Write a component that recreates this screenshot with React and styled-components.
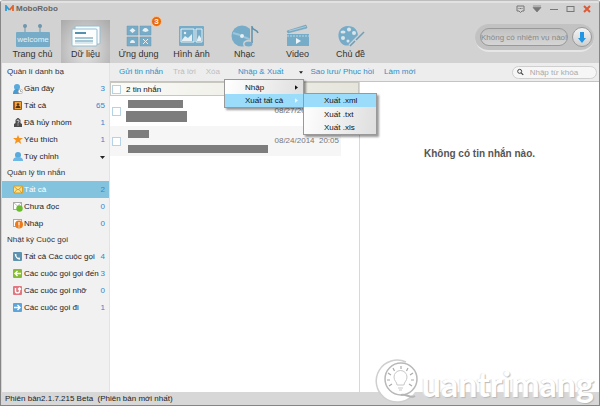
import { useState } from "react";
import styled, { createGlobalStyle } from "styled-components";

const GlobalStyle = createGlobalStyle`
  * {
    box-sizing: border-box;
  }

  body {
    margin: 0;
    font-family: "Liberation Sans", Arial, sans-serif;
    font-size: 8px;
    color: #333;
  }

  button, input {
    font: inherit;
    color: inherit;
    margin: 0;
    padding: 0;
    border: none;
    background: none;
  }
`;

const Window = styled.div`
  position: relative;
  min-height: 100vh;
  display: flex;
  flex-direction: column;
  overflow: hidden;
  background: #fff;
  border: 1px solid #858585;
  border-top-color: #bdbdbd;
  border-radius: 3px 3px 0 0;
`;

const TopBar = styled.header`
  display: flex;
  justify-content: space-between;
  height: 62px;
  background: #d2d2d2;
  border-top: 2px solid #e2e2e2;
`;

const TopLeft = styled.div`
  display: flex;
  flex-direction: column;
  justify-content: space-between;
`;

const TopRight = styled.div`
  display: flex;
  flex-direction: column;
  align-items: flex-end;
`;

const Brand = styled.h1`
  display: flex;
  align-items: center;
  gap: 2px;
  height: 11px;
  margin: 0 4px;
  font-size: 8px;
  font-weight: 700;
  color: #666;
`;

const Nav = styled.nav`
  display: flex;
  gap: 4px;
  padding-left: 7px;
`;

const Tab = styled.button`
  position: relative;
  display: flex;
  flex-direction: column;
  align-items: center;
  justify-content: flex-end;
  width: 49px;
  height: 43px;
  padding-bottom: 3px;
  font-size: 9px;
  line-height: 12px;
  white-space: nowrap;
  background: ${(p) =>
    p.$active
      ? "radial-gradient(ellipse at 50% 70%, #dadada 20%, #a9a9a9 100%)"
      : "none"};
`;

const Badge = styled.span`
  position: absolute;
  top: -4px;
  right: 1px;
  width: 11px;
  height: 11px;
  border-radius: 50%;
  border: 1px solid #f6c9a0;
  background: #e9690c;
  color: #fff;
  font-size: 8px;
  font-weight: 700;
  line-height: 9px;
`;

const Controls = styled.div`
  display: flex;
  align-items: center;
  gap: 6px;
  height: 12px;
  padding-right: 7px;

  button {
    display: flex;
  }
`;

const TaskArea = styled.div`
  display: flex;
  align-items: center;
  margin: 9px 5px 0 0;
  padding: 3px 2px 3px 5px;
  gap: 4px;
  height: 28px;
  border-radius: 14px;
  background: #c2c2c2;
  border-bottom: 2px solid #e6e6e6;
`;

const TaskLabel = styled.div`
  width: 88px;
  height: 18px;
  border: 1px solid #999;
  border-radius: 9px;
  background: linear-gradient(#c2c2c2, #d5d5d5);
  color: #898989;
  line-height: 17px;
  text-align: center;
  white-space: nowrap;
`;

const DownloadButton = styled.button`
  display: flex;
  align-items: center;
  justify-content: center;
  width: 20px;
  height: 20px;
  border: 1px solid #999;
  border-radius: 50%;
  background: linear-gradient(#f4f4f4, #cfcfcf);
`;

const Body = styled.div`
  flex: 1;
  display: grid;
  grid-template-columns: 109px 1fr;
`;

const Sidebar = styled.aside`
  padding-top: 1px;
  background: #f1f1f1;
  border-left: 1px solid #d5d5d5;
  border-right: 1px solid #e3e3e3;
`;

const GroupTitle = styled.h2`
  margin: 0;
  padding-left: 5px;
  font-size: 8px;
  font-weight: 400;
  line-height: 16px;
  color: #333;
`;

const SideRow = styled.button`
  display: flex;
  align-items: center;
  gap: 1px;
  width: 100%;
  height: 17px;
  padding: 0 4px 0 11px;
  text-align: left;
  white-space: nowrap;
  background: ${(p) => (p.$active ? "#84c3de" : "none")};
  color: ${(p) => (p.$active ? "#fff" : "#222")};

  svg {
    flex: none;
  }
`;

const Count = styled.span`
  margin-left: auto;
  color: #3585cf;
`;

const Main = styled.main`
  display: flex;
  flex-direction: column;
  min-width: 0;
`;

const Toolbar = styled.div`
  display: flex;
  align-items: center;
  justify-content: space-between;
  height: 19px;
  padding: 0 2px 0 9px;
  background: #ededed;
  border-bottom: 1px solid #c4c4c4;
`;

const Actions = styled.div`
  display: flex;
  align-items: center;
  gap: 10px;
`;

const Action = styled.button`
  display: flex;
  align-items: center;
  gap: 16px;
  line-height: 12px;
  white-space: nowrap;
  color: #2f8fc8;

  &:disabled {
    color: #bdbdbd;
  }
`;

const MenuAnchor = styled.div`
  position: relative;
  margin: 0 -3px 0 8px;
`;

const Menu = styled.div`
  position: absolute;
  z-index: 2;
  top: ${(p) => (p.$sub ? "-1px" : "13px")};
  left: ${(p) => (p.$sub ? "100%" : "-14px")};
  width: ${(p) => (p.$sub ? "74px" : "80px")};
  border: 1px solid #999;
  background: linear-gradient(100deg, #fff, #dedede);
  box-shadow: 2px 2px 2px rgba(0, 0, 0, 0.4);
`;

const MenuSlot = styled.div`
  position: relative;
`;

const MenuItem = styled.button`
  display: flex;
  align-items: center;
  justify-content: space-between;
  width: 100%;
  height: ${(p) => (p.$tall ? "14px" : "13px")};
  padding: 0 5px 0 20px;
  color: #111;
  white-space: nowrap;
  background: ${(p) => (p.$active ? "#9bdcfb" : "none")};
`;

const Search = styled.label`
  display: flex;
  align-items: center;
  gap: 6px;
  width: 85px;
  height: 13px;
  padding: 0 4px;
  border: 1px solid #cfcfcf;
  border-radius: 7px;
  background: #f6f6f6;

  input {
    width: 100%;
    min-width: 0;
    outline: none;
  }

  input::placeholder {
    color: #aaa;
    opacity: 1;
  }
`;

const Panes = styled.div`
  flex: 1;
  display: grid;
  grid-template-columns: 250px 1fr;
`;

const List = styled.section`
  border-right: 1px solid #d8d8d8;
`;

const ListHeader = styled.label`
  display: flex;
  align-items: center;
  gap: 5px;
  height: 14px;
  padding-left: 1px;
  border: 1px solid #c9c8c0;
  background: linear-gradient(90deg, #fbfbf8, #e6e5dc);
  color: #111;
`;

const Check = styled.input.attrs({ type: "checkbox" })`
  appearance: none;
  flex: none;
  width: 9px;
  height: 9px;
  && {
    border: 1px solid #b4d3e6;
    background: #fff;
  }
`;

const Message = styled.div`
  display: flex;
  align-items: center;
  height: 30px;
  margin-right: 18px;
  padding: 0 2px;
  background: ${(p) => (p.$alt ? "#f6f6f6" : "#fff")};
`;

const Redacted = styled.div`
  flex: 1;
  display: flex;
  flex-direction: column;
  gap: ${(p) => (p.$wide ? "7px" : "3px")};
  padding-left: 5px;
`;

const Bar = styled.span`
  width: ${(p) => p.$width}px;
  height: ${(p) => p.$height}px;
  margin-left: ${(p) => (p.$inset ? "2px" : "0")};
  background: #7d7d7d;
`;

const MessageBody = styled.div`
  position: relative;
  flex: 1;
`;

const Time = styled.time`
  position: absolute;
  right: 0;
  top: 6px;
  line-height: 10px;
  color: #777;
  white-space: pre;
`;

const Empty = styled.section`
  display: flex;
  justify-content: center;
  padding-top: 65px;
  font-size: 10px;
  line-height: 14px;
  font-weight: 700;
  color: #555;
`;

const Status = styled.footer`
  height: 13px;
  padding-left: 4px;
  background: #d7d7d7;
  line-height: 14px;
  color: #222;
`;

const Watermark = styled.div`
  position: absolute;
  right: 5px;
  bottom: 0;
  display: flex;
  align-items: flex-end;
  pointer-events: none;

  span {
    font-family: Lato, sans-serif;
    font-size: 34px;
    line-height: 42px;
    font-weight: 700;
    color: #fff;
    text-shadow: 1px 1px 1px #b8b8b8, -1px 0 1px #e4e4e4;
  }
`;

const BLUE = "#77acc9";

const tabs = [
  {
    label: "Trang chủ",
    icon: (
      <svg width="36" height="25" viewBox="0 0 36 25">
        <path d="M10 3v8M25 3v8" stroke="#6f97ac" strokeWidth="1" />
        <circle cx="10" cy="3" r="2" fill="#6f97ac" />
        <circle cx="25" cy="3" r="2" fill="#6f97ac" />
        <rect x="1" y="9" width="34" height="15" rx="1" fill={BLUE} />
        <text x="18" y="19" textAnchor="middle" fontFamily="Liberation Sans" fontSize="8" fill="#e3eff5">
          welcome
        </text>
      </svg>
    ),
  },
  {
    label: "Dữ liệu",
    icon: (
      <svg width="32" height="23" viewBox="0 0 32 23">
        <rect x="5" y="1" width="25" height="18" rx="1" fill="#f7fbfd" stroke="#95bdcf" />
        <rect x="2" y="4" width="25" height="17" rx="1" fill="#fcfefe" stroke="#95bdcf" />
        <path d="M5 8h11" stroke="#5590ae" strokeWidth="2" />
        <path d="M5 13h18M5 16h18" stroke="#5590ae" strokeWidth="1" />
        <path d="M5 18h18" stroke="#b4d3e0" strokeWidth="1" />
      </svg>
    ),
  },
  {
    label: "Ứng dụng",
    badge: 3,
    icon: (
      <svg width="26" height="23" viewBox="0 0 26 23">
        <path d="M1 1h11v9H1zM14 1h11v9H14zM1 12h11v9H1zM14 12h11v9H14z" fill={BLUE} stroke="#6899b3" strokeWidth=".5" />
        <path d="M6.500 3l3 2.500-3 2.500-3-2.500zM19.500 3c2 0 3 2 3 3l-3 1-3-1c0-1 1-3 3-3zM4 18c0-4 5-4 5 0z" fill="#e6f0f4" />
        <path d="M17 14l5 5M22 14l-5 5" stroke="#e6f0f4" />
      </svg>
    ),
  },
  {
    label: "Hình ảnh",
    icon: (
      <svg width="27" height="23" viewBox="0 0 27 23">
        <rect x="1" y="1" width="25" height="20" rx="1" fill={BLUE} />
        <path d="M3 4h13v13H3zM18 4h6v13h-6z" fill="none" stroke="#e6f0f4" />
        <path d="M4 15l3-4 3 2 4-4v7H4z" fill="#e6f0f4" />
        <circle cx="7" cy="8" r="1.200" fill="#e6f0f4" />
        <path d="M19 15l2-5 2 3v3h-4z" fill="#e6f0f4" />
      </svg>
    ),
  },
  {
    label: "Nhạc",
    icon: (
      <svg width="28" height="23" viewBox="0 0 28 23">
        <circle cx="11" cy="11" r="10.500" fill={BLUE} />
        <path d="M2 8l7 2M13 12l7 3" stroke="#9bc5da" strokeWidth="2" />
        <circle cx="11" cy="11" r="2" fill="#e6f0f4" />
        <path d="M21 1v17M21 2c1 4 5 2 6 6" stroke="#d2d2d2" strokeWidth="4" fill="none" />
        <ellipse cx="17" cy="19" rx="5" ry="4" fill="#d2d2d2" />
        <path d="M21 1v17M21 2c1 4 5 2 6 6" stroke="#5e91ab" strokeWidth="1.500" fill="none" />
        <ellipse cx="17.500" cy="19" rx="4" ry="2.500" fill={BLUE} />
      </svg>
    ),
  },
  {
    label: "Video",
    icon: (
      <svg width="24" height="24" viewBox="0 0 24 24">
        <path d="M1 7L20 1l1 3-19 5z" fill={BLUE} stroke="#6899b3" strokeWidth=".5" />
        <path d="M3 7l17-4.500" stroke="#a9cbdb" />
        <rect x="1" y="10" width="22" height="12" fill={BLUE} />
        <path d="M1 12h22" stroke="#b9d6e3" strokeDasharray="2 1" />
        <path d="M10 14l5 3-5 3z" fill="#edf5f8" />
      </svg>
    ),
  },
  {
    label: "Chủ đề",
    icon: (
      <svg width="28" height="23" viewBox="0 0 28 23">
        <path d="M11 1C3 1 0 8 2 14c2 7 9 8 12 5 3-2 6-3 7-8 0-6-4-10-10-10z" fill={BLUE} />
        <g fill="#d9e5ea">
          <ellipse cx="6" cy="7" rx="2.500" ry="1.500" />
          <circle cx="12" cy="4.500" r="2" />
          <circle cx="17" cy="8" r="2" />
          <circle cx="6" cy="13" r="2" />
          <circle cx="11" cy="16" r="1.500" />
        </g>
        <path d="M27 7L13 21" stroke="#d2d2d2" strokeWidth="4" />
        <path d="M27 7l-8 8M18 16l-5 5" stroke="#6f9db5" strokeWidth="1.500" />
      </svg>
    ),
  },
];

const PersonIcon = () => (
  <svg width="10" height="9" viewBox="0 0 10 9">
    <circle cx="5" cy="3" r="3" fill="#58a9dc" />
    <path d="M0 9c0-3 2-4 5-4s5 1 5 4z" fill="#6db7e4" />
  </svg>
);

const RecentIcon = () => (
  <svg width="10" height="10" viewBox="0 0 10 10">
    <circle cx="4" cy="3" r="3" fill="#58a9dc" />
    <path d="M0 10c0-4 2-5 4-5s4 1 4 5z" fill="#4a9ad0" />
    <circle cx="7.500" cy="7.500" r="2.300" fill="#fff" stroke="#aaa" strokeWidth=".6" />
    <path d="M7.500 6v1.700H9" fill="none" stroke="#777" strokeWidth=".6" />
  </svg>
);

const BookIcon = () => (
  <svg width="10" height="9" viewBox="0 0 10 9">
    <rect width="9" height="9" rx="1" fill="#a85614" />
    <rect x="2" y="1" width="6" height="7" fill="#f0a640" />
    <circle cx="5" cy="3.500" r="1.300" fill="#59300d" />
    <path d="M2.500 7c0-3 5-3 5 0z" fill="#59300d" />
  </svg>
);

const UngroupedIcon = () => (
  <svg width="10" height="9" viewBox="0 0 10 9">
    <path d="M1 9V6l1.500-1V2l2-2h1l2 2v3L9 6v3z" fill="#4c4c4c" />
    <path d="M4 3c0-1.500 2-1.500 2 0S5 4 5 5.500M5 6.500v1" fill="none" stroke="#fff" strokeWidth=".8" />
  </svg>
);

const StarIcon = () => (
  <svg width="10" height="9" viewBox="0 0 10 9">
    <path d="M5 0l1.300 3H10L7.200 5.200l1 3.800L5 6.800 1.800 9l1-3.800L0 3h3.700z" fill="#f7941d" />
  </svg>
);

const MailIcon = () => (
  <svg width="10" height="9" viewBox="0 0 10 9">
    <rect x=".5" y="1" width="9" height="7" rx=".5" fill="#fce28a" stroke="#d99c25" />
    <path d="M1 1.500L5 5l4-3.500M1 8l3-3.500M9 8L6 4.500" fill="none" stroke="#c98b1d" strokeWidth=".8" />
  </svg>
);

const UnreadIcon = () => (
  <svg width="10" height="10" viewBox="0 0 10 10">
    <rect x=".5" y=".5" width="8" height="7" fill="#fff" stroke="#aaa" />
    <path d="M1 1l3.500 3L8 1" fill="none" stroke="#aaa" strokeWidth=".7" />
    <circle cx="6.500" cy="6.500" r="3.200" fill="#6bbb2c" />
  </svg>
);

const DraftIcon = () => (
  <svg width="10" height="10" viewBox="0 0 10 10">
    <rect x=".5" y=".5" width="8" height="7" fill="#fff" stroke="#aaa" />
    <circle cx="6" cy="5.500" r="4" fill="#ee7a1a" />
    <path d="M6 3v3.500M6 7.500v1" stroke="#fff" strokeWidth="1.200" />
  </svg>
);

const CallIcon = ({ color, d }) => (
  <svg width="10" height="9" viewBox="0 0 10 9">
    <rect width="9" height="9" rx="1" fill={color} />
    <path d={d} fill="none" stroke="#fff" strokeWidth="1.400" />
  </svg>
);

const groups = [
  {
    title: "Quản lí danh bạ",
    rows: [
      { label: "Gần đây", count: 3, icon: <RecentIcon /> },
      { label: "Tất cả", count: 65, icon: <BookIcon /> },
      { label: "Đã hủy nhóm", count: 1, icon: <UngroupedIcon /> },
      { label: "Yêu thích", count: 1, icon: <StarIcon /> },
      { label: "Tùy chỉnh", more: true, icon: <PersonIcon /> },
    ],
  },
  {
    title: "Quản lý tin nhắn",
    rows: [
      { label: "Tất cả", count: 2, active: true, icon: <MailIcon /> },
      { label: "Chưa đọc", count: 0, icon: <UnreadIcon /> },
      { label: "Nháp", count: 0, icon: <DraftIcon /> },
    ],
  },
  {
    title: "Nhật ký Cuộc gọi",
    rows: [
      { label: "Tất cả Các cuộc gọi", count: 4, icon: <CallIcon color="#5d93ae" d="M2.500 2c0 3 2 5 4.500 5M2 3h1.500M6 7V5.500" /> },
      { label: "Các cuộc gọi gọi đến", count: 3, icon: <CallIcon color="#86bd2f" d="M8 4.500H2M4.500 2L2 4.500 4.500 7" /> },
      { label: "Các cuộc gọi nhỡ", count: 0, icon: <CallIcon color="#e27680" d="M2.500 2v3c0 2.500 4 2.500 4 0V2.500M5 3.500l1.500-1.500L8 3.500" /> },
      { label: "Các cuộc gọi đi", count: 1, icon: <CallIcon color="#5ba5dc" d="M1 4.500h6M4.500 2L7 4.500 4.500 7" /> },
    ],
  },
];

const DownArrow = ({ width = 4 }) => (
  <svg width={width} height="3" viewBox="0 0 5 3">
    <path d="M0 0h5L2.500 3z" fill="#222" />
  </svg>
);

const RightArrow = ({ color }) => (
  <svg width="3" height="5" viewBox="0 0 4 6">
    <path d="M0 0l4 3-4 3z" fill={color} />
  </svg>
);

function Header() {
  return (
    <TopBar>
      <TopLeft>
        <Brand>
          <svg width="9" height="7" viewBox="0 0 9 7">
            <path d="M1 6V1l3.500 4" fill="none" stroke="#2e9bd5" strokeWidth="1.800" />
            <path d="M4.500 5L8 1v5" fill="none" stroke="#e4622a" strokeWidth="1.800" />
          </svg>
          MoboRobo
        </Brand>
        <Nav>
          {tabs.map((tab) => (
            <Tab key={tab.label} $active={tab.label === "Dữ liệu"}>
              {tab.icon}
              {tab.badge && <Badge>{tab.badge}</Badge>}
              {tab.label}
            </Tab>
          ))}
        </Nav>
      </TopLeft>
      <TopRight>
        <Controls>
          <button aria-label="Feedback">
            <svg width="10" height="8" viewBox="0 0 10 8">
              <path d="M1 1h7v5H6L4.500 7.500 3 6H1z" fill="none" stroke="#777" />
              <path d="M2.500 3.500h4" stroke="#777" strokeDasharray="1 .5" />
            </svg>
          </button>
          <button aria-label="Menu">
            <svg width="10" height="8" viewBox="0 0 10 8">
              <path d="M1 1h8M1 2.500h8L5 7z" fill="#777" stroke="#777" strokeWidth=".7" />
            </svg>
          </button>
          <button aria-label="Minimize">
            <svg width="11" height="8" viewBox="0 0 11 8">
              <path d="M2 4.500h8" stroke="#777" />
            </svg>
          </button>
          <button aria-label="Maximize">
            <svg width="11" height="8" viewBox="0 0 11 8">
              <rect x="2" y="1.500" width="7" height="5" fill="none" stroke="#777" />
            </svg>
          </button>
          <button aria-label="Close">
            <svg width="10" height="8" viewBox="0 0 10 8">
              <path d="M2 1l6 6M8 1L2 7" stroke="#dc5a34" strokeWidth="2" />
            </svg>
          </button>
        </Controls>
        <TaskArea>
          <TaskLabel>Không có nhiệm vụ nào!</TaskLabel>
          <DownloadButton aria-label="Download">
            <svg width="8" height="11" viewBox="0 0 8 11">
              <path d="M2 0h4v6h2l-4 5-4-5h2z" fill="#2196e3" />
            </svg>
          </DownloadButton>
        </TaskArea>
      </TopRight>
    </TopBar>
  );
}

function ExportMenu() {
  return (
    <MenuAnchor>
      <Action>
        Nhập &amp; Xuất
        <DownArrow />
      </Action>
      <Menu>
        <MenuItem $tall>
          Nhập
          <RightArrow color="#111" />
        </MenuItem>
        <MenuSlot>
          <MenuItem $active>
            Xuất tất cả
            <RightArrow color="#e8f8ff" />
          </MenuItem>
          <Menu $sub>
            <MenuItem $active>Xuất .xml</MenuItem>
            <MenuItem $tall>Xuất .txt</MenuItem>
            <MenuItem>Xuất .xls</MenuItem>
          </Menu>
        </MenuSlot>
      </Menu>
    </MenuAnchor>
  );
}

function App() {
  const [query, setQuery] = useState("");

  return (
    <>
      <GlobalStyle />
      <Window>
        <Header />
        <Body>
          <Sidebar>
            {groups.map((group) => (
              <div key={group.title}>
                <GroupTitle>{group.title}</GroupTitle>
                {group.rows.map((row) => (
                  <SideRow key={row.label} $active={row.active}>
                    {row.icon}
                    {row.label}
                    <Count>{row.more ? <DownArrow width={5} /> : row.count}</Count>
                  </SideRow>
                ))}
              </div>
            ))}
          </Sidebar>
          <Main>
            <Toolbar>
              <Actions>
                <Action>Gửi tin nhắn</Action>
                <Action disabled>Trả lời</Action>
                <Action disabled>Xóa</Action>
                <ExportMenu />
                <Action>Sao lưu/ Phục hồi</Action>
                <Action>Làm mới</Action>
              </Actions>
              <Search>
                <svg width="8" height="8" viewBox="0 0 8 8">
                  <circle cx="3.200" cy="3.200" r="2.400" fill="none" stroke="#444" strokeWidth="1.200" />
                  <path d="M5 5l2.500 2.500" stroke="#444" strokeWidth="1.500" />
                </svg>
                <input
                  aria-label="Nhập từ khóa"
                  placeholder="Nhập từ khóa"
                  value={query}
                  onChange={(e) => setQuery(e.target.value)}
                />
              </Search>
            </Toolbar>
            <Panes>
              <List>
                <ListHeader>
                  <Check />2 tin nhắn
                </ListHeader>
                <Message>
                  <Check aria-label="08/27/2014" />
                  <MessageBody>
                    <Redacted>
                      <Bar $width={55} $height={8} $inset />
                      <Bar $width={61} $height={11} />
                    </Redacted>
                    <Time>08/27/2014  20:05</Time>
                  </MessageBody>
                </Message>
                <Message $alt>
                  <Check aria-label="08/24/2014" />
                  <MessageBody>
                    <Redacted $wide>
                      <Bar $width={21} $height={8} $inset />
                      <Bar $width={140} $height={8} $inset />
                    </Redacted>
                    <Time>08/24/2014  20:05</Time>
                  </MessageBody>
                </Message>
              </List>
              <Empty>Không có tin nhắn nào.</Empty>
            </Panes>
          </Main>
        </Body>
        <Status>Phiên bản2.1.7.215 Beta&nbsp; (Phiên bản mới nhất)</Status>
        <Watermark>
          <svg width="48" height="48" viewBox="0 0 48 48">
            <circle cx="23" cy="24" r="21" fill="#fff" />
            <path d="M32 5A21 21 0 1 0 38 39" fill="none" stroke="#cfcfcf" strokeWidth="1.500" />
            <circle cx="27" cy="22" r="16" fill="#fff" stroke="#b8b8b8" strokeWidth="1.500" />
            <path d="M23 28c0-3-3-4-3-8a6 6 0 0 1 13 0c0 4-3 5-3 8zM24 31h5M25 33h3" fill="none" stroke="#c8c8c8" />
            <path d="M27 9v3M19 11l1.500 3M34 11l-1.500 3M14 16l3 2M39 16l-3 2M13 23h3M37 23h3M15 29l3-2M38 29l-3-2" stroke="#aaa" strokeWidth="1.200" />
            <path d="M27 38c5-2 9 4 14 1" fill="none" stroke="#b5b5b5" strokeWidth="2" />
          </svg>
          <span>uantrimang</span>
        </Watermark>
      </Window>
    </>
  );
}

export default App;
